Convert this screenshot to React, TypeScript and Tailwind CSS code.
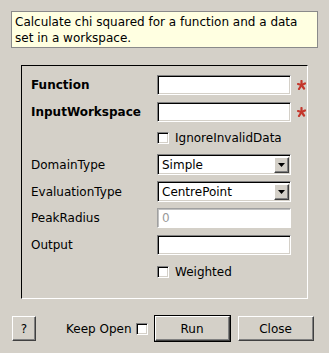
const sunken =
  "border border-t-[#808080] border-l-[#808080] border-b-white border-r-white shadow-[inset_1px_1px_0_#000,inset_-1px_-1px_0_#d4d0c8]";
const raised =
  "border border-t-white border-l-white border-b-[#404040] border-r-[#404040] shadow-[inset_-1px_-1px_0_#808080]";

function Star() {
  return (
    <svg width="9" height="10" viewBox="0 0 9 10" className="ml-[6px]">
      <g stroke="#c4372c" strokeWidth="2.2" strokeLinecap="round">
        <line x1="4.5" y1="1" x2="4.5" y2="5" />
        <line x1="4.5" y1="5" x2="8" y2="3.5" />
        <line x1="4.5" y1="5" x2="1" y2="4" />
        <line x1="4.5" y1="5" x2="2" y2="9" />
        <line x1="4.5" y1="5" x2="7" y2="8.5" />
      </g>
    </svg>
  );
}

function TextBox({ value, disabled }: { value?: string; disabled?: boolean }) {
  return (
    <div
      className={`w-[134px] h-[20px] bg-white flex items-center px-[4px] ${
        disabled
          ? "border border-t-[#a0a0a0] border-l-[#a0a0a0] border-b-white border-r-white shadow-[inset_1px_1px_0_#c0c0c0] text-[#9a9a9a]"
          : sunken
      }`}
    >
      {value}
    </div>
  );
}

function Check() {
  return <div className={`w-[12px] h-[12px] bg-white ${sunken}`} />;
}

function Select({ value }: { value: string }) {
  return (
    <div className={`w-[134px] h-[21px] bg-white flex items-center pl-[4px] pr-[1px] ${sunken}`}>
      <span className="flex-1">{value}</span>
      <div className={`w-[15px] h-[16px] bg-[#d4d0c8] flex items-center justify-center ${raised}`}>
        <svg width="7" height="4" viewBox="0 0 7 4">
          <path d="M0 0h7L3.5 4z" fill="#000" />
        </svg>
      </div>
    </div>
  );
}

function Row({ label, bold, children }: { label?: string; bold?: boolean; children: React.ReactNode }) {
  return (
    <div className="flex items-center h-[20px]">
      <div className={`w-[126px] ${bold ? "font-bold" : ""}`}>{label}</div>
      {children}
    </div>
  );
}

export default function App() {
  return (
    <div className="w-[329px] h-[353px] bg-[#d4d0c8] text-[12px] text-black font-['DejaVu_Sans',sans-serif] pt-[11px] overflow-hidden">
      {/* Description */}
      <div className="mx-[11px] h-[37px] bg-[#ffffe1] border border-[#8a8a8a] px-[3px] pt-[2px] leading-[16px]">
        Calculate chi squared for a function and a data set in a workspace.
      </div>

      {/* Properties */}
      <div className="ml-[21px] mt-[17px] w-[287px] h-[234px] border border-t-[#000] border-l-[#000] border-b-white border-r-white pl-[9px] pt-[9px] flex flex-col gap-[6.67px]">
        <Row label="Function" bold>
          <TextBox />
          <Star />
        </Row>
        <Row label="InputWorkspace" bold>
          <TextBox />
          <Star />
        </Row>
        <Row>
          <Check />
          <span className="ml-[6px]">IgnoreInvalidData</span>
        </Row>
        <Row label="DomainType">
          <Select value="Simple" />
        </Row>
        <Row label="EvaluationType">
          <Select value="CentrePoint" />
        </Row>
        <Row label="PeakRadius">
          <TextBox value="0" disabled />
        </Row>
        <Row label="Output">
          <TextBox />
        </Row>
        <Row>
          <Check />
          <span className="ml-[6px]">Weighted</span>
        </Row>
      </div>

      {/* Buttons */}
      <div className="flex items-center mt-[16px] pl-[12px]">
        <button className={`w-[24px] h-[25px] bg-[#d4d0c8] ${raised}`}>?</button>
        <span className="ml-[30px]">Keep Open</span>
        <div className="ml-[4px]">
          <Check />
        </div>
        <button className="ml-[6px] w-[77px] h-[27px] border border-black bg-[#d4d0c8]">
          <div className={`w-full h-full flex items-center justify-center ${raised}`}>Run</div>
        </button>
        <button className={`ml-[7px] w-[76px] h-[25px] bg-[#d4d0c8] ${raised}`}>Close</button>
      </div>
    </div>
  );
}
